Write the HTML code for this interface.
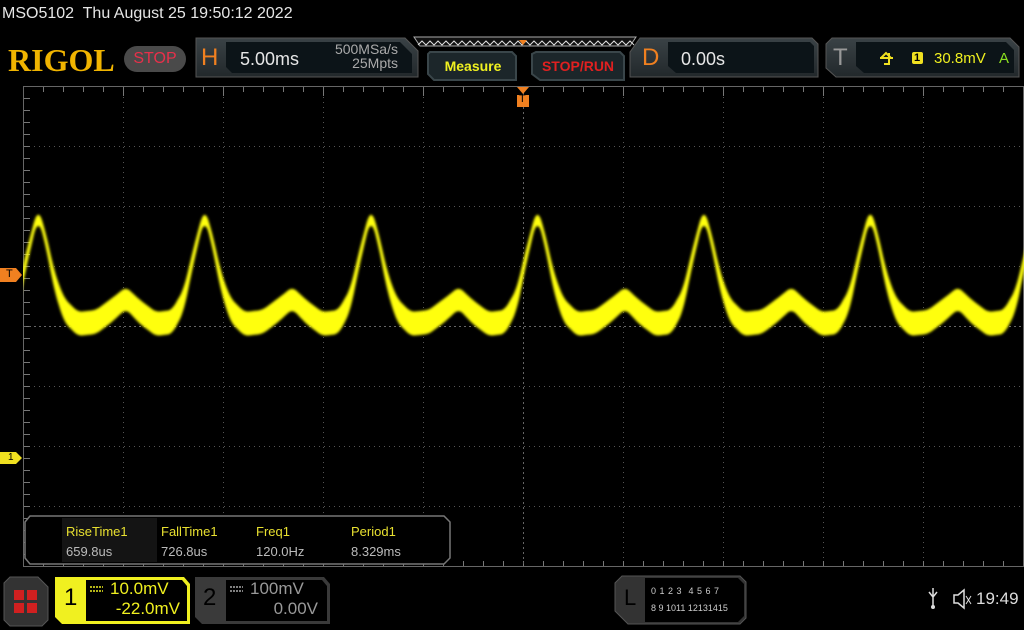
<!DOCTYPE html>
<html><head><meta charset="utf-8"><style>
*{margin:0;padding:0;box-sizing:border-box}
body{width:1024px;height:630px;background:#000;overflow:hidden;position:relative;font-family:"Liberation Sans",sans-serif;color:#ddd}
.abs{position:absolute}
</style></head><body>
<div class="abs" style="left:2px;top:5px;font-size:16px;color:#e6e6e6;white-space:pre">MSO5102  Thu August 25 19:50:12 2022</div>
<div class="abs" style="left:8px;top:42px;font-family:'Liberation Serif',serif;font-weight:bold;font-size:32px;color:#f0b400;letter-spacing:0px">RIGOL</div>
<div class="abs" style="left:124px;top:46px;width:62px;height:26px;border-radius:13px;background:#4a4a4a;color:#e8304a;font-size:16px;text-align:center;line-height:26px">STOP</div>

<svg class="abs" style="left:0;top:0" width="1024" height="630">
 <defs>
  <linearGradient id="bx" x1="0" y1="0" x2="0" y2="1"><stop offset="0" stop-color="#3a4246"/><stop offset="1" stop-color="#22282b"/></linearGradient>
  <filter id="bl"><feGaussianBlur stdDeviation="1.2"/></filter>
 </defs>
 <path d="M196 38 H405 L418 51 V77 H196 Z" fill="url(#bx)" stroke="#555" stroke-width="1"/>
 <path d="M226 42 H400 L412 54 V73 H232 L226 67 Z" fill="#0c1418"/>
 <path d="M414 37 H636 L630 46 H420 Z" fill="#111" stroke="#aaa" stroke-width="1"/>
 <path id="zz" d="" fill="none" stroke="#ddd" stroke-width="1"/>
 <path d="M519 40 L527 40 L523 45 Z" fill="#f08020"/>
 <path d="M430 52 H512 L516 56 V80 H434 L428 74 V54 Z" fill="#1c262a" stroke="#3a464a" stroke-width="2"/>
 <path d="M536 52 H620 L624 56 V80 H540 L532 74 V54 Z" fill="#1c262a" stroke="#3a464a" stroke-width="2"/>
 <path d="M640 38 H812 L818 44 V77 H630 V52 Z" fill="url(#bx)" stroke="#555"/>
 <path d="M668 42 H810 L814 46 V73 H676 L668 66 Z" fill="#0c1418"/>
 <path d="M832 38 H1010 L1019 47 V77 H836 L826 68 V44 Z" fill="url(#bx)" stroke="#555"/>
 <path d="M856 42 H1006 L1014 50 V73 H864 L856 66 Z" fill="#0c1418"/>
 <path d="M880 58 H893 M884 64 H889 V53 M881 58 L886 53 L891 58" stroke="#f0e020" stroke-width="2" fill="none"/>
 <rect x="912" y="52" width="11" height="12" rx="2" fill="#f0e020"/>

 <g id="grid"></g>
 <rect x="23.5" y="86.5" width="1000" height="480" fill="none" stroke="#666" stroke-width="1"/>
 <path d="M517 87 H529 L523 94 Z" fill="#f08020"/>
 <rect x="517" y="95" width="12" height="12" fill="#f08020"/>
 <path id="wf" d="" fill="#ffff10" filter="url(#bl)"/>
 <rect x="0" y="86" width="23" height="480" fill="#000"/>
 <path d="M0 268 H16 L22 275 L16 282 H0 Z" fill="#f08020"/>
 <path d="M0 452 H16 L22 458 L16 464 H0 Z" fill="#f0e020"/>

 <path d="M30 516 H444 L450 522 V558 L444 564 H30 L25 558 V522 Z" fill="#000" stroke="#777" stroke-width="1.5"/>
 <rect x="62" y="518" width="95" height="44" fill="#141414"/>

 <path d="M10 577 H38 L48 587 V620 L42 626 H10 L4 620 V583 Z" fill="#333" stroke="#555"/>
 <rect x="14" y="590" width="10" height="10" fill="#d02020"/><rect x="27" y="590" width="10" height="10" fill="#d02020"/>
 <rect x="14" y="603" width="10" height="10" fill="#d02020"/><rect x="27" y="603" width="10" height="10" fill="#d02020"/>
 <path d="M55 577 H184 L190 584 V624 H62 L55 617 Z" fill="#f0f020"/>
 <path d="M86 580 H182 L187 586 V621 H86 Z" fill="#000"/>
 <path d="M195 577 H324 L330 584 V624 H202 L195 617 Z" fill="#3a3a3a"/>
 <path d="M226 580 H322 L327 586 V621 H226 Z" fill="#000"/>
 <path d="M90 587 H103 M90 591 H103" stroke="#f0f020" stroke-width="1.5" stroke-dasharray="2 1"/>
 <path d="M230 587 H243 M230 591 H243" stroke="#aaa" stroke-width="1.5" stroke-dasharray="2 1"/>
 <path d="M622 576 H740 L746 582 V618 L740 624 H628 L615 611 V583 Z" fill="#333" stroke="#555"/>
 <path d="M645 578 H738 L744 584 V616 L738 622 H645 Z" fill="#000"/>
 <path d="M933 588 V606 M929 592 L933 597 L937 592" stroke="#ddd" stroke-width="1.5" fill="none"/>
 <circle cx="933" cy="607" r="2" fill="#ddd"/>
 <path d="M954 595 H958 L964 590 V608 L958 603 H954 Z" fill="none" stroke="#ddd" stroke-width="1.5"/>
 <path d="M966 596 L971 604 M971 596 L966 604" stroke="#ddd" stroke-width="1"/>
</svg>

<div class="abs" style="left:201px;top:44px;font-size:24px;color:#f08020">H</div>
<div class="abs" style="left:240px;top:49px;font-size:18px;color:#e6e6e6">5.00ms</div>
<div class="abs" style="left:324px;top:42px;font-size:14px;color:#aaa;line-height:14px;text-align:right;width:74px">500MSa/s<br>25Mpts</div>
<div class="abs" style="left:430px;top:58px;width:86px;text-align:center;font-size:14px;font-weight:bold;color:#f0f020">Measure</div>
<div class="abs" style="left:532px;top:58px;width:92px;text-align:center;font-size:14px;font-weight:bold;color:#e02020">STOP/RUN</div>
<div class="abs" style="left:642px;top:44px;font-size:24px;color:#f08020">D</div>
<div class="abs" style="left:681px;top:49px;font-size:18px;color:#e6e6e6">0.00s</div>
<div class="abs" style="left:833px;top:44px;font-size:24px;color:#999">T</div>
<div class="abs" style="left:914px;top:52px;font-size:11px;color:#000;font-weight:bold">1</div>
<div class="abs" style="left:934px;top:50px;font-size:15px;color:#f0f020">30.8mV</div>
<div class="abs" style="left:999px;top:50px;font-size:15px;color:#8ce020">A</div>
<div class="abs" style="left:519px;top:93px;font-size:11px;color:#000">T</div>
<div class="abs" style="left:6px;top:268px;font-size:11px;color:#000">T</div>
<div class="abs" style="left:8px;top:452px;font-size:10px;color:#000">1</div>

<div class="abs" style="left:66px;top:524px;font-size:13px;color:#e8e030">RiseTime1</div>
<div class="abs" style="left:161px;top:524px;font-size:13px;color:#e8e030">FallTime1</div>
<div class="abs" style="left:256px;top:524px;font-size:13px;color:#e8e030">Freq1</div>
<div class="abs" style="left:351px;top:524px;font-size:13px;color:#e8e030">Period1</div>
<div class="abs" style="left:66px;top:544px;font-size:13px;color:#bbb">659.8us</div>
<div class="abs" style="left:161px;top:544px;font-size:13px;color:#bbb">726.8us</div>
<div class="abs" style="left:256px;top:544px;font-size:13px;color:#bbb">120.0Hz</div>
<div class="abs" style="left:351px;top:544px;font-size:13px;color:#bbb">8.329ms</div>

<div class="abs" style="left:64px;top:584px;font-size:24px;color:#000">1</div>
<div class="abs" style="left:110px;top:579px;font-size:17px;color:#f0f020">10.0mV</div>
<div class="abs" style="left:100px;top:599px;width:80px;text-align:right;font-size:17px;color:#f0f020">-22.0mV</div>
<div class="abs" style="left:203px;top:584px;font-size:24px;color:#000">2</div>
<div class="abs" style="left:250px;top:579px;font-size:17px;color:#999">100mV</div>
<div class="abs" style="left:240px;top:599px;width:78px;text-align:right;font-size:17px;color:#999">0.00V</div>
<div class="abs" style="left:624px;top:585px;font-size:22px;color:#000">L</div>
<div class="abs" style="left:651px;top:586px;font-size:9px;color:#ccc;word-spacing:1px;white-space:pre">0 1 2 3  4 5 6 7</div>
<div class="abs" style="left:651px;top:603px;font-size:9px;color:#ccc;white-space:pre">8 9 1011 12131415</div>
<div class="abs" style="left:976px;top:589px;font-size:17px;color:#ddd">19:49</div>

<script>
(function(){
var g=document.getElementById('grid'),s='';
for(var i=1;i<10;i++){var x=23.5+i*100;s+='<line x1="'+x+'" y1="87" x2="'+x+'" y2="566" stroke="#555" stroke-dasharray="1 4"/>';}
for(var j=1;j<8;j++){var y=86.5+j*60;s+='<line x1="24" y1="'+y+'" x2="1023" y2="'+y+'" stroke="#555" stroke-dasharray="1 4"/>';}
for(var x=43;x<1023;x+=20){s+='<line x1="'+(x+.5)+'" y1="87" x2="'+(x+.5)+'" y2="'+(x%100==23?96:92)+'" stroke="#777"/>';s+='<line x1="'+(x+.5)+'" y1="566" x2="'+(x+.5)+'" y2="561" stroke="#777"/>';}
for(var y=98;y<566;y+=12){s+='<line x1="24" y1="'+(y+.5)+'" x2="30" y2="'+(y+.5)+'" stroke="#777"/>';}
s+='<line x1="523.5" y1="87" x2="523.5" y2="566" stroke="#666" stroke-dasharray="2 3"/>';
s+='<line x1="24" y1="326.5" x2="1023" y2="326.5" stroke="#666" stroke-dasharray="2 3"/>';
g.innerHTML=s;
var k=[[0,212],[8,240],[16,280],[26,310],[40,324],[58,322],[74,310],[88,298],[102,312],[118,324],[134,322],[146,300],[154,262],[166.4,212]];
function lin(t){t=((t%166.4)+166.4)%166.4;for(var i=0;i<k.length-1;i++){if(t<=k[i+1][0]){var a=k[i],b=k[i+1],u=(t-a[0])/(b[0]-a[0]);return a[1]+(b[1]-a[1])*u;}}return 212;}
function f(t){var sm=0,n=0;for(var d=-4;d<=4;d++){sm+=lin(t+d);n++;}return sm/n;}
var up=[],dn=[];
for(var x=20;x<=1026;x+=1){var c=f(x-38);var th=10+14*Math.max(0,Math.min(1,(c-212)/100));up.push(x+' '+(c-th/2).toFixed(1));dn.unshift(x+' '+(c+th/2).toFixed(1));}
document.getElementById('wf').setAttribute('d','M'+up.join(' L')+' L'+dn.join(' L')+' Z');
var z='M418 45';for(var x=418;x<632;x+=8){z+=' L'+(x+4)+' 41 L'+(x+8)+' 45';}
document.getElementById('zz').setAttribute('d',z);
})();
</script>
</body></html>
